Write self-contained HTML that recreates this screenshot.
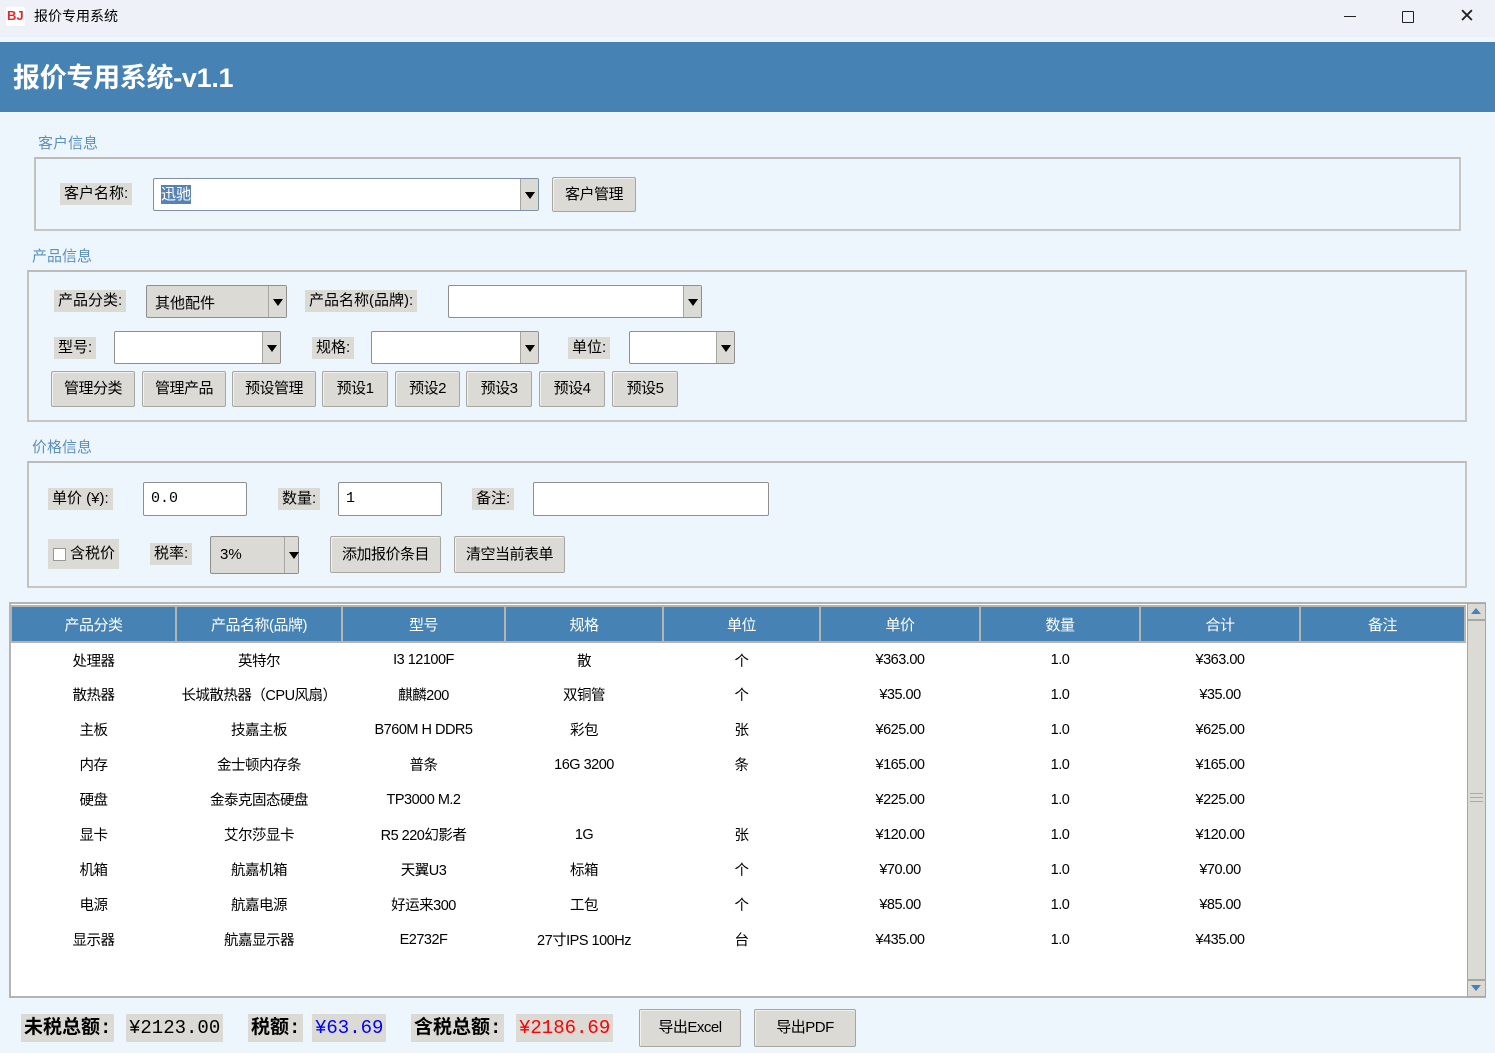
<!DOCTYPE html>
<html><head><meta charset="utf-8"><style>
*{box-sizing:border-box;margin:0;padding:0}
body{width:1495px;height:1053px;background:#eef6fd;font-family:"Liberation Sans","Noto Sans CJK SC",sans-serif;position:relative;overflow:hidden;color:#000}
.a{position:absolute}
.lbl{position:absolute;background:#dcdad5;font-size:15px;line-height:22px;padding:0 4px;white-space:nowrap}
.btn{position:absolute;background:#dcdad5;border:1px solid #a8a6a1;border-radius:2px;box-shadow:inset 1px 1px 0 #f2f1ee;font-size:15px;text-align:center;letter-spacing:-0.5px;white-space:nowrap}
.grp{position:absolute;border:2px solid #c8c6c2;border-top-color:#bdbbb7;border-left-color:#c4c2bd}
.gt{position:absolute;color:#5b8fc0;font-size:15px}
.cb{position:absolute;background:#fff;border:1px solid #8f8f8f;border-radius:2px}
.cb .ar{position:absolute;right:0;top:0;bottom:0;width:18px;background:#dcdad5;border-left:1px solid #a8a6a1}
.cb .ar:after{content:"";position:absolute;left:4px;top:50%;margin-top:-3px;border-left:5px solid transparent;border-right:5px solid transparent;border-top:7px solid #000}
.in{position:absolute;background:#fff;border:1px solid #8f8f8f;border-radius:2px;font-family:"Liberation Mono","Noto Sans CJK SC",monospace;font-size:15px;padding-left:7px}
table{border-collapse:collapse;position:absolute;left:10px;top:605px;table-layout:fixed}
th{background:#4682b4;color:#fff;font-weight:normal;font-size:15px;height:36px;border:2px solid #b6b4b0;letter-spacing:-0.5px}
td{font-size:14.5px;text-align:center;height:35px;letter-spacing:-0.5px}
.tot{position:absolute;background:#dcdad5;font-family:"Liberation Mono","Noto Sans CJK SC",monospace;font-size:19px;line-height:28px;padding:0 3px;font-weight:bold;top:1014px}
</style></head><body>
<div class="a" style="left:0;top:0;width:1495px;height:37px;background:#eef2f8"></div>
<div class="a" style="left:6px;top:7px;width:19px;height:19px;background:#fff;border-radius:2px"></div>
<div class="a" style="left:7px;top:8px;font-size:13px;font-weight:bold;color:#e8262d;line-height:16px">BJ</div>
<div class="a" style="left:34px;top:7px;font-size:14px;line-height:18px">报价专用系统</div>
<div class="a" style="left:1344px;top:16px;width:12px;height:1px;background:#222"></div>
<div class="a" style="left:1402px;top:11px;width:12px;height:12px;border:1px solid #222;border-radius:1px"></div>
<div class="a" style="left:1459px;top:8px;font-size:19px;line-height:18px;color:#222">✕</div>
<div class="a" style="left:0;top:42px;width:1495px;height:70px;background:#4682b4"></div>
<div class="a" style="left:13px;top:60px;color:#fff;font-size:27px;font-weight:bold;line-height:36px;letter-spacing:-0.3px">报价专用系统-v1.1</div>
<div class="gt" style="left:38px;top:132px">客户信息</div>
<div class="grp" style="left:34px;top:157px;width:1427px;height:74px"></div>
<div class="lbl" style="left:60px;top:183px">客户名称:</div>
<div class="cb" style="left:153px;top:178px;width:386px;height:33px;border-color:#7c90a8"><span class="a" style="left:7px;top:6px;background:#3a6ea5;color:#fff;font-size:15px;line-height:19px;opacity:.85">迅驰</span><div class="ar"></div></div>
<div class="btn" style="left:552px;top:177px;width:84px;height:35px;line-height:33px">客户管理</div>
<div class="gt" style="left:32px;top:245px">产品信息</div>
<div class="grp" style="left:27px;top:270px;width:1440px;height:152px"></div>
<div class="lbl" style="left:54px;top:290px">产品分类:</div>
<div class="cb" style="left:146px;top:285px;width:141px;height:33px;background:#dcdad5"><span class="a" style="left:8px;top:6px;font-size:15px">其他配件</span><div class="ar"></div></div>
<div class="lbl" style="left:305px;top:290px">产品名称(品牌):</div>
<div class="cb" style="left:448px;top:285px;width:254px;height:33px"><div class="ar"></div></div>
<div class="lbl" style="left:54px;top:337px">型号:</div>
<div class="cb" style="left:114px;top:331px;width:167px;height:33px"><div class="ar"></div></div>
<div class="lbl" style="left:312px;top:337px">规格:</div>
<div class="cb" style="left:371px;top:331px;width:168px;height:33px"><div class="ar"></div></div>
<div class="lbl" style="left:568px;top:337px">单位:</div>
<div class="cb" style="left:629px;top:331px;width:106px;height:33px"><div class="ar"></div></div>
<div class="btn" style="left:51px;top:371px;width:84px;height:36px;line-height:34px">管理分类</div>
<div class="btn" style="left:142px;top:371px;width:84px;height:36px;line-height:34px">管理产品</div>
<div class="btn" style="left:232px;top:371px;width:84px;height:36px;line-height:34px">预设管理</div>
<div class="btn" style="left:322px;top:371px;width:66px;height:36px;line-height:34px">预设1</div>
<div class="btn" style="left:395px;top:371px;width:65px;height:36px;line-height:34px">预设2</div>
<div class="btn" style="left:466px;top:371px;width:66px;height:36px;line-height:34px">预设3</div>
<div class="btn" style="left:539px;top:371px;width:66px;height:36px;line-height:34px">预设4</div>
<div class="btn" style="left:612px;top:371px;width:66px;height:36px;line-height:34px">预设5</div>
<div class="gt" style="left:32px;top:436px">价格信息</div>
<div class="grp" style="left:27px;top:461px;width:1440px;height:127px"></div>
<div class="lbl" style="left:48px;top:488px">单价 (¥):</div>
<div class="in" style="left:143px;top:482px;width:104px;height:34px;line-height:32px">0.0</div>
<div class="lbl" style="left:278px;top:488px">数量:</div>
<div class="in" style="left:338px;top:482px;width:104px;height:34px;line-height:32px">1</div>
<div class="lbl" style="left:472px;top:488px">备注:</div>
<div class="in" style="left:533px;top:482px;width:236px;height:34px"></div>
<div class="lbl" style="left:48px;top:539px;height:30px;line-height:30px;padding-left:22px">含税价</div>
<div class="a" style="left:53px;top:548px;width:13px;height:13px;background:#fff;border:1px solid #999"></div>
<div class="lbl" style="left:150px;top:543px">税率:</div>
<div class="cb" style="left:210px;top:536px;width:89px;height:38px;background:#dcdad5"><span class="a" style="left:9px;top:9px;font-size:15px">3%</span><div class="ar" style="width:14px"></div></div>
<div class="btn" style="left:330px;top:536px;width:111px;height:37px;line-height:35px">添加报价条目</div>
<div class="btn" style="left:454px;top:536px;width:111px;height:37px;line-height:35px">清空当前表单</div>
<div class="a" style="left:9px;top:602px;width:1477px;height:396px;background:#fff;border:2px solid #b6b4b0"></div>
<table>
<colgroup><col style="width:165px"><col style="width:166px"><col style="width:163px"><col style="width:158px"><col style="width:157px"><col style="width:160px"><col style="width:160px"><col style="width:160px"><col style="width:165px"></colgroup>
<tr><th>产品分类</th><th>产品名称(品牌)</th><th>型号</th><th>规格</th><th>单位</th><th>单价</th><th>数量</th><th>合计</th><th>备注</th></tr>
<tr><td>处理器</td><td>英特尔</td><td>I3 12100F</td><td>散</td><td>个</td><td>¥363.00</td><td>1.0</td><td>¥363.00</td><td></td></tr>
<tr><td>散热器</td><td>长城散热器（CPU风扇）</td><td>麒麟200</td><td>双铜管</td><td>个</td><td>¥35.00</td><td>1.0</td><td>¥35.00</td><td></td></tr>
<tr><td>主板</td><td>技嘉主板</td><td>B760M H DDR5</td><td>彩包</td><td>张</td><td>¥625.00</td><td>1.0</td><td>¥625.00</td><td></td></tr>
<tr><td>内存</td><td>金士顿内存条</td><td>普条</td><td>16G 3200</td><td>条</td><td>¥165.00</td><td>1.0</td><td>¥165.00</td><td></td></tr>
<tr><td>硬盘</td><td>金泰克固态硬盘</td><td>TP3000 M.2</td><td></td><td></td><td>¥225.00</td><td>1.0</td><td>¥225.00</td><td></td></tr>
<tr><td>显卡</td><td>艾尔莎显卡</td><td>R5 220幻影者</td><td>1G</td><td>张</td><td>¥120.00</td><td>1.0</td><td>¥120.00</td><td></td></tr>
<tr><td>机箱</td><td>航嘉机箱</td><td>天翼U3</td><td>标箱</td><td>个</td><td>¥70.00</td><td>1.0</td><td>¥70.00</td><td></td></tr>
<tr><td>电源</td><td>航嘉电源</td><td>好运来300</td><td>工包</td><td>个</td><td>¥85.00</td><td>1.0</td><td>¥85.00</td><td></td></tr>
<tr><td>显示器</td><td>航嘉显示器</td><td>E2732F</td><td>27寸IPS 100Hz</td><td>台</td><td>¥435.00</td><td>1.0</td><td>¥435.00</td><td></td></tr>
</table>
<div class="a" style="left:1467px;top:603px;width:19px;height:394px;background:#dcdad5;border:1px solid #a8a6a1"></div>
<div class="a" style="left:1468px;top:604px;width:17px;height:17px;border-bottom:2px solid #a8a6a1"></div>
<div class="a" style="left:1471px;top:608px;border-left:5px solid transparent;border-right:5px solid transparent;border-bottom:6px solid #4682b4"></div>
<div class="a" style="left:1468px;top:979px;width:17px;height:17px;border-top:2px solid #a8a6a1"></div>
<div class="a" style="left:1471px;top:985px;border-left:5px solid transparent;border-right:5px solid transparent;border-top:6px solid #4682b4"></div>
<div class="a" style="left:1470px;top:793px;width:13px;height:9px;border-top:1px solid #aaa;border-bottom:1px solid #aaa"></div>
<div class="a" style="left:1470px;top:797px;width:13px;height:1px;background:#aaa"></div>
<div class="tot" style="left:21px">未税总额:</div>
<div class="tot" style="left:126px;font-weight:normal">¥2123.00</div>
<div class="tot" style="left:248px">税额:</div>
<div class="tot" style="left:312px;font-weight:normal;color:#0000ff">¥63.69</div>
<div class="tot" style="left:411px">含税总额:</div>
<div class="tot" style="left:516px;font-weight:normal;color:#ff0000">¥2186.69</div>
<div class="btn" style="left:639px;top:1009px;width:102px;height:38px;line-height:36px">导出Excel</div>
<div class="btn" style="left:754px;top:1009px;width:102px;height:38px;line-height:36px">导出PDF</div>
</body></html>
